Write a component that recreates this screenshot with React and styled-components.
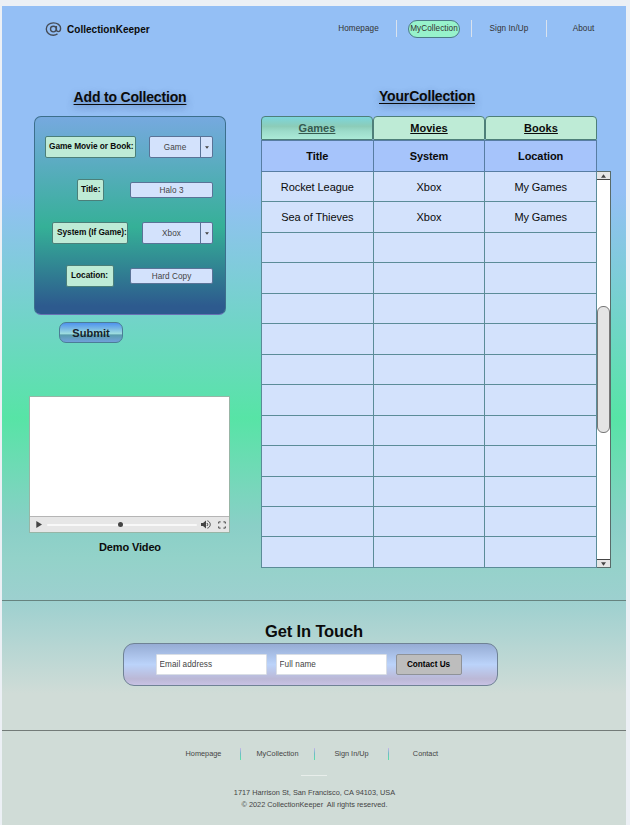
import React from "react";
import styled, { createGlobalStyle, css } from "styled-components";

const GlobalStyle = createGlobalStyle`
  *, *::before, *::after { box-sizing: border-box; }
  body {
    margin: 0;
    background: #ecf0f5;
    font-family: "Liberation Sans", Arial, sans-serif;
    color: #0b0b0b;
    overflow: hidden;
  }
  button, input { font: inherit; margin: 0; }
`;

const Page = styled.div`
  display: flex;
  flex-direction: column;
  width: 624px;
  height: 819px;
  margin: 6px 0 0 2px;
  background: linear-gradient(
    180deg,
    #94bff5 0,
    #94bff5 186px,
    #57e4a6 412px,
    #8acfc7 520px,
    #93d2c9 552px,
    #9dd0cf 594px,
    #d0dcd7 688px,
    #d0dcd7 100%
  );
`;

const Header = styled.header`
  display: flex;
  align-items: flex-start;
  height: 82px;
  padding: 14px 0 0 43px;
`;

const Brand = styled.div`
  display: flex;
  align-items: center;
  gap: 5px;
  width: 276px;
  height: 18px;
  font-size: 10px;
  font-weight: 700;
  letter-spacing: 0.03px;
`;

const Nav = styled.nav`
  display: grid;
  grid-template-columns: 75px 75px 75px 74px;
  height: 17px;
`;

const NavItem = styled.a`
  display: flex;
  align-items: center;
  justify-content: center;
  height: 17px;
  font-size: 8.2px;
  letter-spacing: 0.06px;
  color: #333;
  & + & { border-left: 1px solid #d9e2ee; }
`;

const ActivePill = styled.span`
  display: flex;
  align-items: center;
  justify-content: center;
  width: 52px;
  height: 18px;
  flex: none;
  border: 1px solid #4b7b86;
  border-radius: 9px;
  background: #97f2cb;
`;

const Main = styled.main`
  display: flex;
  height: 512px;
`;

const LeftColumn = styled.section`
  display: flex;
  flex-direction: column;
  width: 259px;
  padding-left: 27px;
`;

const RightColumn = styled.section`
  width: 350px;
`;

const SectionTitle = styled.h2`
  width: ${(p) => p.$width}px;
  height: 28px;
  margin: 0 0 0 ${(p) => p.$indent}px;
  padding-top: ${(p) => p.$top}px;
  font-size: 14px;
  line-height: 17px;
  letter-spacing: -0.18px;
  text-align: center;
  text-decoration: underline;
  text-decoration-thickness: 1px;
  text-underline-offset: 2px;
  text-shadow: 0 3px 7px rgba(40, 70, 120, 0.5);
  white-space: nowrap;
`;

const FormPanel = styled.form`
  display: flex;
  flex-direction: column;
  gap: 21px;
  width: 192px;
  height: 199px;
  margin-left: 5px;
  padding: 19px 12px 0 0;
  border: 1px solid #3c6f8c;
  border-bottom-color: #6870b4;
  border-radius: 7px;
  background: linear-gradient(180deg, #76a9df 0%, #35b097 56%, #2d5a8e 96%);
`;

const FormRow = styled.div`
  display: flex;
  align-items: center;
  justify-content: flex-end;
  gap: ${(p) => p.$gap}px;
  height: 22px;
`;

const FieldLabel = styled.label`
  width: ${(p) => p.$width}px;
  height: 22px;
  padding-left: ${(p) => p.$inset ?? 3}px;
  border: 1px solid #4b7f79;
  border-radius: 2px;
  background: #beebd6;
  font-size: 8.33px;
  font-weight: 700;
  line-height: 19px;
  letter-spacing: -0.06px;
  white-space: nowrap;
`;

const fieldBox = css`
  border: 1px solid #5a7397;
  border-radius: 2px;
  background: #d3e2fc;
  color: #444;
  font-size: 8.2px;
  letter-spacing: 0.06px;
`;

const ValueBox = styled.div`
  ${fieldBox}
  width: 83px;
  height: 16px;
  line-height: 15px;
  text-align: center;
`;

const SelectBox = styled.div`
  ${fieldBox}
  display: grid;
  grid-template-columns: 1fr 12px;
  width: ${(p) => p.$width}px;
  height: 22px;
  line-height: 21px;
  text-align: center;
`;

const SelectArrow = styled.span`
  display: flex;
  align-items: center;
  justify-content: center;
  border-left: 1px solid #5a7397;
`;

const SubmitButton = styled.button`
  width: 64px;
  height: 21px;
  margin: 7px 0 0 30px;
  padding: 0;
  border: 1px solid #4b7d96;
  border-radius: 7px;
  background: linear-gradient(180deg, #4f93ef 0%, #79b9e4 30%, #a0dfdf 58%, #589cac 62%, #71a0db 100%);
  color: #16222a;
  font-size: 11px;
  font-weight: 700;
  line-height: 18px;
`;

const VideoPlayer = styled.div`
  display: flex;
  flex-direction: column;
  width: 201px;
  height: 137px;
  margin-top: 53px;
  border: 1px solid #98b5a6;
  background: #fff;
`;

const VideoScreen = styled.div`
  flex: 1;
`;

const VideoControls = styled.div`
  display: flex;
  align-items: center;
  height: 16px;
  padding: 0 3px 0 6px;
  border-top: 1px solid #b5b5b5;
  background: #e6e6e6;
`;

const SeekBar = styled.div`
  display: flex;
  align-items: center;
  justify-content: center;
  width: 150px;
  height: 2px;
  margin: 0 4px 0 5px;
  padding-right: 3px;
  border-radius: 1px;
  background: #f8f8f8;
`;

const SeekThumb = styled.span`
  width: 5px;
  height: 5px;
  flex: none;
  border-radius: 50%;
  background: #444;
`;

const ControlIcons = styled.span`
  display: flex;
  align-items: center;
  gap: 7px;
`;

const VideoCaption = styled.p`
  width: 202px;
  margin: 8px 0 0;
  font-size: 11px;
  font-weight: 700;
  line-height: 13px;
  letter-spacing: -0.15px;
  text-align: center;
`;

const Tabs = styled.div`
  display: grid;
  grid-template-columns: 112px 112px 112px;
  height: 24px;
`;

const Tab = styled.button`
  padding: 0;
  border: 1px solid #4e7f79;
  border-radius: 4px 4px 1px 1px;
  background: ${(p) =>
    p.$active
      ? "linear-gradient(180deg, #7cd6dc 0%, #8cccb8 42%, #9cdccb 65%, #abead7 100%)"
      : "#beebd6"};
  color: ${(p) => (p.$active ? "#35594f" : "#0b0b0b")};
  font-size: 11px;
  font-weight: 700;
  line-height: 22px;
  letter-spacing: 0.03px;
  text-decoration: underline;
  text-underline-offset: 1px;
`;

const TableArea = styled.div`
  display: flex;
  align-items: flex-end;
`;

const Table = styled.table`
  width: 336px;
  height: 428px;
  table-layout: fixed;
  border-collapse: collapse;
  font-size: 11px;
  letter-spacing: -0.08px;
  text-align: center;
`;

const HeadCell = styled.th`
  height: 31px;
  padding: 0;
  border: 1px solid #577da3;
  background: #a6c4fb;
`;

const Cell = styled.td`
  height: 30.4px;
  padding: 0;
  border: 1px solid #5b8c98;
  background: #d3e2fc;
`;

const Scrollbar = styled.div`
  display: flex;
  flex-direction: column;
  width: 14px;
  height: 397px;
  border: 1px solid #596b69;
  border-left: 0;
  background: #fff;
`;

const ScrollButton = styled.span`
  display: flex;
  align-items: center;
  justify-content: center;
  height: 8px;
  border: 0 solid #454545;
  border-width: ${(p) => (p.$end ? "1px 0 0" : "0 0 1px")};
  background: #e6e6e6;
`;

const ScrollTrack = styled.div`
  flex: 1;
  padding-top: 126px;
`;

const ScrollThumb = styled.div`
  height: 127px;
  border: 1px solid #777;
  border-radius: 6px;
  background: #e4e4e4;
`;

const ContactSection = styled.section`
  display: flex;
  flex-direction: column;
  align-items: center;
  height: 130px;
  padding-top: 19px;
  border-top: 1px solid #66837f;
`;

const ContactTitle = styled.h2`
  margin: 0;
  font-size: 16.5px;
  line-height: 22px;
  letter-spacing: -0.13px;
`;

const ContactForm = styled.form`
  display: flex;
  gap: 9px;
  width: 375px;
  height: 43px;
  margin: 1px 8px 0 0;
  padding: 10px 0 0 32px;
  border: 1px solid #6f8295;
  border-radius: 11px;
  background: linear-gradient(180deg, #96acd4 0%, #bbd3fa 50%, #bbb8d6 85%, #c8c2e4 100%);
`;

const ContactInput = styled.input`
  width: 111px;
  height: 21px;
  padding: 0 3px;
  border: 1px solid #d9dee5;
  border-radius: 1px;
  outline: 0;
  background: #fff;
  font-size: 8.2px;
  letter-spacing: 0.06px;
  &::placeholder { color: #444; opacity: 1; }
`;

const ContactButton = styled.button`
  width: 66px;
  height: 21px;
  padding: 0;
  border: 1px solid #8f9297;
  border-radius: 2px;
  background: #bdbdbd;
  font-size: 8.2px;
  font-weight: 700;
`;

const Footer = styled.footer`
  display: flex;
  flex-direction: column;
  align-items: center;
  height: 95px;
  border-top: 1px solid #737b78;
  color: #444;
  font-size: 7.33px;
`;

const FooterNav = styled.nav`
  display: flex;
  align-items: center;
  height: 11px;
  margin: 17px 0 0 1px;
`;

const FooterLink = styled.a`
  width: 73px;
  text-align: center;
`;

const FooterDivider = styled.span`
  width: 1px;
  height: 12px;
  background: linear-gradient(180deg, #c8b4ea 0%, #70bbc6 45%, #57e4a6 100%);
`;

const ShortRule = styled.span`
  width: 26px;
  height: 1px;
  margin-top: 16px;
  background: #e8eeeb;
`;

const Address = styled.address`
  margin: 11px 0 0 1px;
  font-style: normal;
  line-height: 12px;
  text-align: center;
  white-space: pre;
`;

function AtIcon() {
  return (
    <svg width="17" height="16" viewBox="0 0 17 16" fill="none" stroke="#454b55" strokeWidth="1.35">
      <path d="M12.5 12.9C11.3 13.7 10 14.2 8.4 14.2C4.5 14.2 1.3 11.6 1.3 8S4.5 1.8 8.4 1.8S15.6 4.1 15.6 7.3C15.6 9.4 14.8 10.6 13.4 10.6C12.1 10.6 11.4 9.9 11.4 8.6V5.1" />
      <ellipse cx="8.4" cy="8" rx="2.9" ry="2.8" />
    </svg>
  );
}

function Triangle({ up, small }) {
  return (
    <svg width={small ? 4 : 5} height={small ? 3 : 4} viewBox="0 0 6 4" fill="#444">
      <path d={up ? "M0 4L3 0L6 4Z" : "M0 0L3 4L6 0Z"} />
    </svg>
  );
}

function PlayIcon() {
  return (
    <svg width="6" height="7" viewBox="0 0 6 7" fill="#444">
      <path d="M.3 0L6 3.5L.3 7Z" />
    </svg>
  );
}

function VolumeIcon() {
  return (
    <svg width="10" height="9" viewBox="0 0 10 9" fill="none" stroke="#444" strokeWidth="1">
      <path d="M0 3H2L5 .5V8.5L2 6H0Z" fill="#444" stroke="none" />
      <path d="M6 3Q7.4 4.5 6 6M6.4 .8C10.2 2 10.2 7 6.4 8.2" />
    </svg>
  );
}

function FullscreenIcon() {
  return (
    <svg width="8" height="8" viewBox="0 0 8 8" fill="none" stroke="#444" strokeWidth="1">
      <path d="M.7 2.6V.9H2.6M5.4 .9H7.3V2.6M7.3 5.4V7.1H5.4M2.6 7.1H.7V5.4" />
    </svg>
  );
}

const entries = [
  ["Rocket League", "Xbox", "My Games"],
  ["Sea of Thieves", "Xbox", "My Games"],
  ...Array.from({ length: 11 }, () => ["", "", ""]),
];

function SelectField({ width, value }) {
  return (
    <SelectBox $width={width}>
      <span>{value}</span>
      <SelectArrow><Triangle small /></SelectArrow>
    </SelectBox>
  );
}

export default function App() {
  return (
    <>
      <GlobalStyle />
      <Page>
        <Header>
          <Brand><AtIcon />CollectionKeeper</Brand>
          <Nav>
            <NavItem>Homepage</NavItem>
            <NavItem><ActivePill>MyCollection</ActivePill></NavItem>
            <NavItem>Sign In/Up</NavItem>
            <NavItem>About</NavItem>
          </Nav>
        </Header>
        <Main>
          <LeftColumn>
            <SectionTitle $width={192} $indent={5} $top={1}>Add to Collection</SectionTitle>
            <FormPanel>
              <FormRow $gap={13}>
                <FieldLabel $width={91}>Game Movie or Book:</FieldLabel>
                <SelectField width={64} value="Game" />
              </FormRow>
              <FormRow $gap={26}>
                <FieldLabel $width={27}>Title:</FieldLabel>
                <ValueBox>Halo 3</ValueBox>
              </FormRow>
              <FormRow $gap={14}>
                <FieldLabel $width={76} $inset={4}>System (If Game):</FieldLabel>
                <SelectField width={71} value="Xbox" />
              </FormRow>
              <FormRow $gap={16}>
                <FieldLabel $width={48} $inset={4}>Location:</FieldLabel>
                <ValueBox>Hard Copy</ValueBox>
              </FormRow>
            </FormPanel>
            <SubmitButton type="button">Submit</SubmitButton>
            <VideoPlayer>
              <VideoScreen />
              <VideoControls>
                <PlayIcon />
                <SeekBar><SeekThumb /></SeekBar>
                <ControlIcons>
                  <VolumeIcon />
                  <FullscreenIcon />
                </ControlIcons>
              </VideoControls>
            </VideoPlayer>
            <VideoCaption>Demo Video</VideoCaption>
          </LeftColumn>
          <RightColumn>
            <SectionTitle $width={332} $indent={0} $top={0}>YourCollection</SectionTitle>
            <Tabs>
              <Tab $active>Games</Tab>
              <Tab>Movies</Tab>
              <Tab>Books</Tab>
            </Tabs>
            <TableArea>
              <Table>
                <thead>
                  <tr>
                    <HeadCell>Title</HeadCell>
                    <HeadCell>System</HeadCell>
                    <HeadCell>Location</HeadCell>
                  </tr>
                </thead>
                <tbody>
                  {entries.map((row, i) => (
                    <tr key={i}>
                      {row.map((value, j) => <Cell key={j}>{value}</Cell>)}
                    </tr>
                  ))}
                </tbody>
              </Table>
              <Scrollbar>
                <ScrollButton><Triangle up /></ScrollButton>
                <ScrollTrack><ScrollThumb /></ScrollTrack>
                <ScrollButton $end><Triangle /></ScrollButton>
              </Scrollbar>
            </TableArea>
          </RightColumn>
        </Main>
        <ContactSection>
          <ContactTitle>Get In Touch</ContactTitle>
          <ContactForm>
            <ContactInput placeholder="Email address" />
            <ContactInput placeholder="Full name" />
            <ContactButton type="button">Contact Us</ContactButton>
          </ContactForm>
        </ContactSection>
        <Footer>
          <FooterNav>
            <FooterLink>Homepage</FooterLink>
            <FooterDivider />
            <FooterLink>MyCollection</FooterLink>
            <FooterDivider />
            <FooterLink>Sign In/Up</FooterLink>
            <FooterDivider />
            <FooterLink>Contact</FooterLink>
          </FooterNav>
          <ShortRule />
          <Address>{"1717 Harrison St, San Francisco, CA 94103, USA\n© 2022 CollectionKeeper  All rights reserved."}</Address>
        </Footer>
      </Page>
    </>
  );
}
